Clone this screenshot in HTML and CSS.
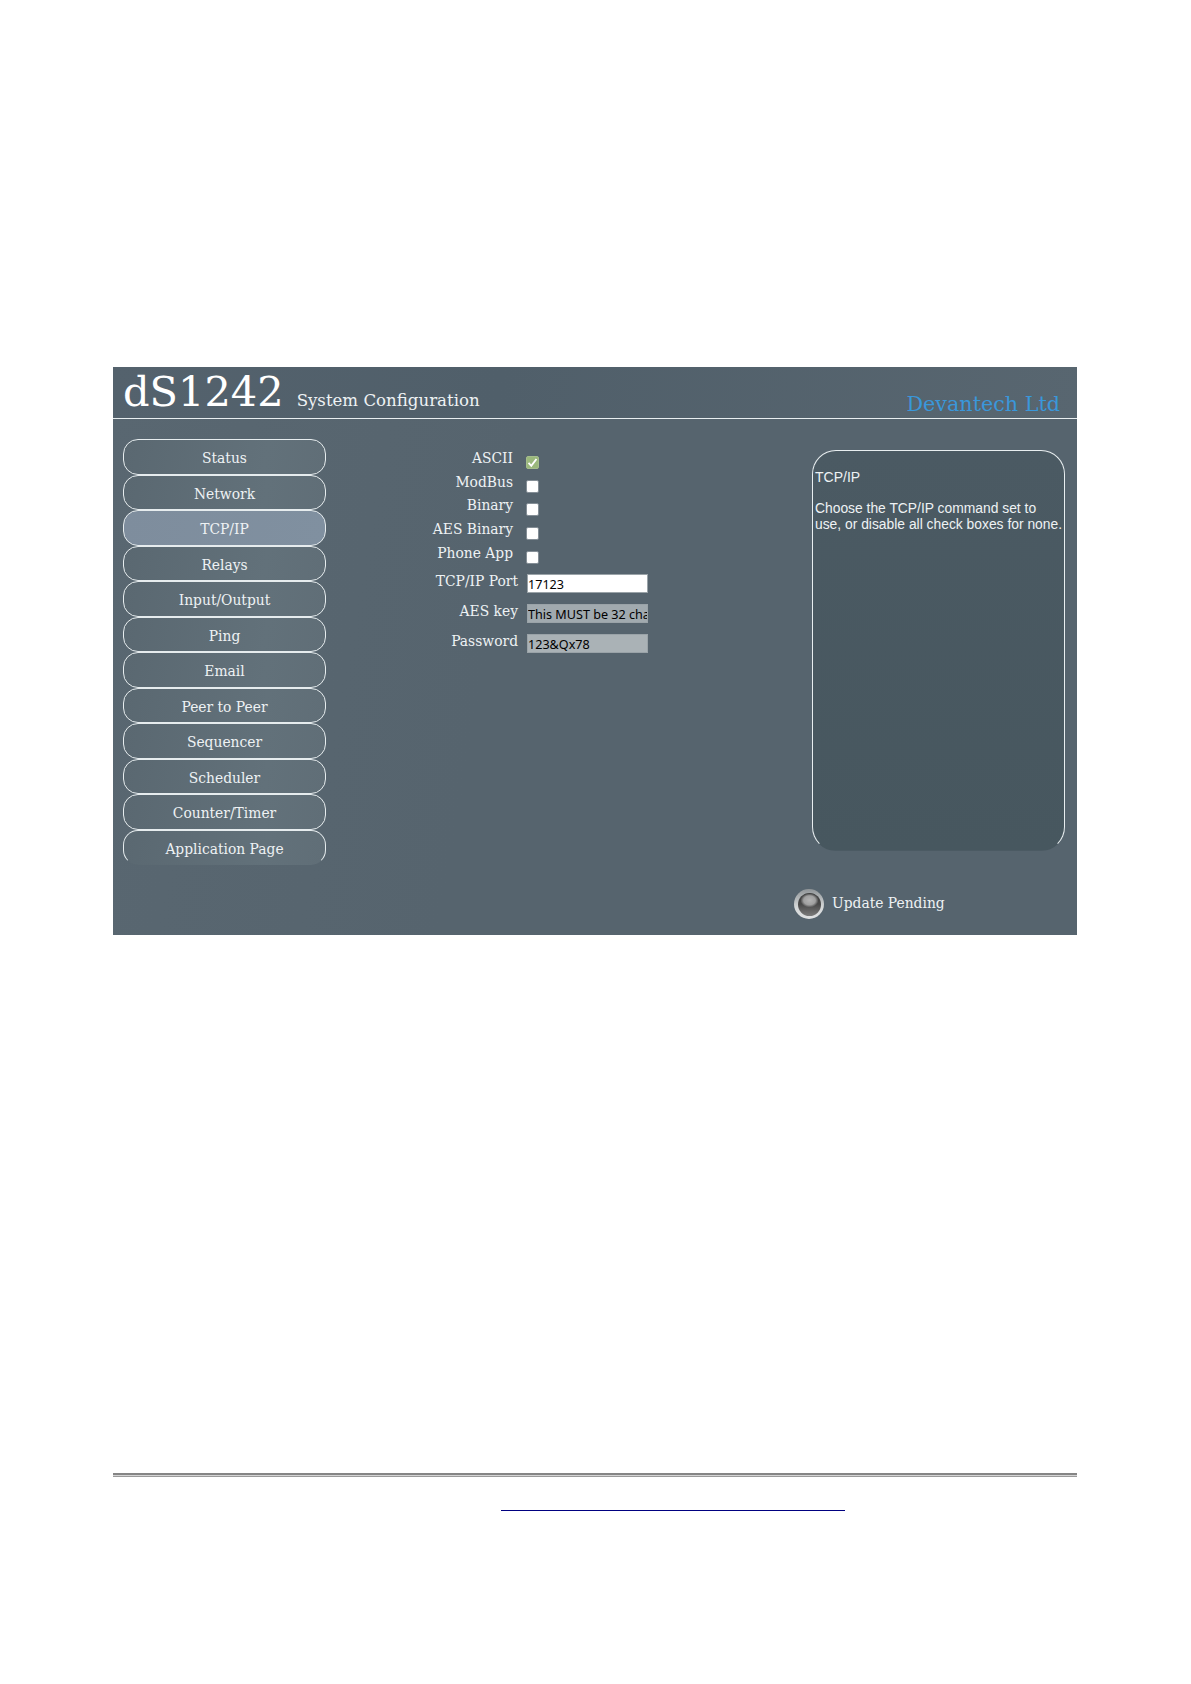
FILE: index.html
```html
<!DOCTYPE html>
<html lang="en">
<head>
<meta charset="utf-8">
<title>dS1242 System Configuration</title>
<link rel="stylesheet" href="styles.css">
</head>
<body>
<div class="page">
  <div class="panel">
    <header class="head">
      <span class="model">dS1242</span>
      <span class="subtitle">System Configuration</span>
      <span class="brand">Devantech Ltd</span>
    </header>
    <div class="main">
      <nav class="nav">
        <a class="btn">Status</a>
        <a class="btn">Network</a>
        <a class="btn active">TCP/IP</a>
        <a class="btn">Relays</a>
        <a class="btn">Input/Output</a>
        <a class="btn">Ping</a>
        <a class="btn">Email</a>
        <a class="btn">Peer to Peer</a>
        <a class="btn">Sequencer</a>
        <a class="btn">Scheduler</a>
        <a class="btn">Counter/Timer</a>
        <a class="btn last">Application Page</a>
      </nav>
      <form class="form">
        <div class="checks">
          <label class="check-row"><span class="check-label">ASCII</span><span class="box on"><svg viewBox="0 0 10 10" class="tick"><path d="M1.4 5.4 L3.9 8 L8.6 1.8" fill="none" stroke="#fff" stroke-width="1.7"/></svg></span></label>
          <label class="check-row"><span class="check-label">ModBus</span><span class="box"></span></label>
          <label class="check-row"><span class="check-label">Binary</span><span class="box"></span></label>
          <label class="check-row"><span class="check-label">AES Binary</span><span class="box"></span></label>
          <label class="check-row"><span class="check-label">Phone App</span><span class="box"></span></label>
        </div>
        <div class="fields">
          <label class="field"><span class="field-label">TCP/IP Port</span><input class="input" value="17123"></label>
          <label class="field"><span class="field-label">AES key</span><input class="input grey" value="This MUST be 32 characters long"></label>
          <label class="field"><span class="field-label">Password</span><input class="input light" value="123&amp;Qx78"></label>
        </div>
      </form>
      <div class="side">
        <aside class="help">
          <p class="help-title">TCP/IP</p>
          <p class="help-text">Choose the TCP/IP command set to use, or disable all check boxes for none.</p>
        </aside>
        <div class="status">
          <span class="led"><span class="led-core"></span></span>
          <span class="status-text">Update Pending</span>
        </div>
      </div>
    </div>
  </div>
  <div class="rule"></div>
  <div class="foot"><a class="foot-link"></a></div>
</div>
</body>
</html>
```
FILE: styles.css
```css
html, body { margin: 0; padding: 0; background: #fff; }
.page { padding: 367px 114px 0 113px; font-family: "DejaVu Serif", serif; }
.panel {
  height: 568px;
  background: linear-gradient(100deg, #596771 0%, #56646e 40%, #56646e 100%);
  color: #eef2f4;
  box-sizing: border-box;
}
.head {
  height: 51px;
  border-bottom: 1px solid #e8eef0;
  display: flex;
  align-items: baseline;
  padding-left: 10px;
  padding-right: 17px;
  box-sizing: content-box;
  line-height: 50px;
  overflow: hidden;
  background: linear-gradient(100deg, #54626d 0%, #505f6a 40%, #586670 100%);
}
.model { font-size: 41.5px; color: #fff; }
.subtitle { font-size: 16.6px; margin-left: 13px; }
.brand { font-size: 20.7px; color: #3a97da; margin-left: auto; position: relative; top: 5px; }
.main { display: flex; padding: 20px 12px 0 10px; }
.nav { width: 203px; flex: none; display: flex; flex-direction: column; }
.btn {
  height: 35.5px;
  box-sizing: border-box;
  border: 1px solid #e6ecee;
  border-radius: 15px;
  background: linear-gradient(100deg, #5a6871, #62717a 70%, #606e77);
  text-align: center;
  font-size: 13.85px;
  line-height: 36px;
  color: #eef2f4;
}
.btn.active { background: linear-gradient(100deg, #7e8d9d, #8090a0); }
.btn.last { border-bottom-color: transparent; }
.form { flex: 1; padding-top: 9px; }
.checks { display: flex; flex-direction: column; }
.check-row { display: flex; height: 23.7px; }
.check-label { width: 187px; text-align: right; font-size: 13.85px; line-height: 20px; flex: none; }
.box {
  width: 11px; height: 11px; margin: 8px 0 0 13px;
  background: #fff; border: 1px solid #848e96; border-radius: 2px; box-sizing: content-box;
  display: block;
}
.box.on { background: #9ab87c; border-color: #a5bd8c; }
.tick { display: block; width: 11px; height: 11px; }
.fields { display: flex; flex-direction: column; padding-top: 5px; }
.field { display: flex; height: 30px; align-items: flex-start; }
.field-label { width: 192px; text-align: right; font-size: 13.85px; line-height: 20px; flex: none; }
.input {
  width: 121px; height: 19px; margin: 3px 0 0 9px; box-sizing: border-box;
  border: 1px solid #9aa3a8; background: #fff; color: #000;
  font-family: "Noto Sans", sans-serif; font-size: 12.6px; padding: 1px 0 0 0; outline: none;
}
.input.grey { background: #a1aaaf; }
.input.light { background: #aab2b6; }
.side { margin-top: 11px; width: 253px; flex: none; display: flex; flex-direction: column; }
.help {
  width: 253px; height: 401px; box-sizing: border-box;
  border: 1px solid #e8eef0; border-bottom-color: transparent; border-radius: 24px;
  background: linear-gradient(180deg, #4b5a63, #47575f);
  padding: 18px 0 0 2px;
  font-family: "Liberation Sans", sans-serif;
  font-size: 13.85px;
  line-height: 16px;
  color: #eef2f4;
}
.help-title { margin: 0 0 15px; font-size: 14px; }
.help-text { margin: 0; }
.status { display: flex; align-items: center; margin: 38px 0 0 -18px; }
.led {
  width: 30px; height: 30px; border-radius: 50%; box-sizing: border-box;
  display: flex; align-items: center; justify-content: center;
  background: linear-gradient(180deg, #8f9497, #d4d7d8 60%, #dfe1e2);
  flex: none;
}
.led-core {
  width: 23px; height: 23px; border-radius: 50%;
  background: radial-gradient(ellipse 9px 7px at 50% 32%, #b4b4b4 0%, #a0a0a0 65%, transparent 100%),
    linear-gradient(180deg, #3c3c3c, #4a4a4a 50%, #7a7a7a);
}
.status-text { margin-left: 8px; font-size: 13.85px; position: relative; top: -1px; }
.rule { margin-top: 538px; height: 4px; box-sizing: border-box; border-top: 2px solid #858585; border-bottom: 1px solid #9a9a9a; background: #d4d4d4; }
.foot { padding-top: 33px; padding-left: 388px; }
.foot-link { display: block; width: 344px; border-bottom: 1px solid #000080; }
```
